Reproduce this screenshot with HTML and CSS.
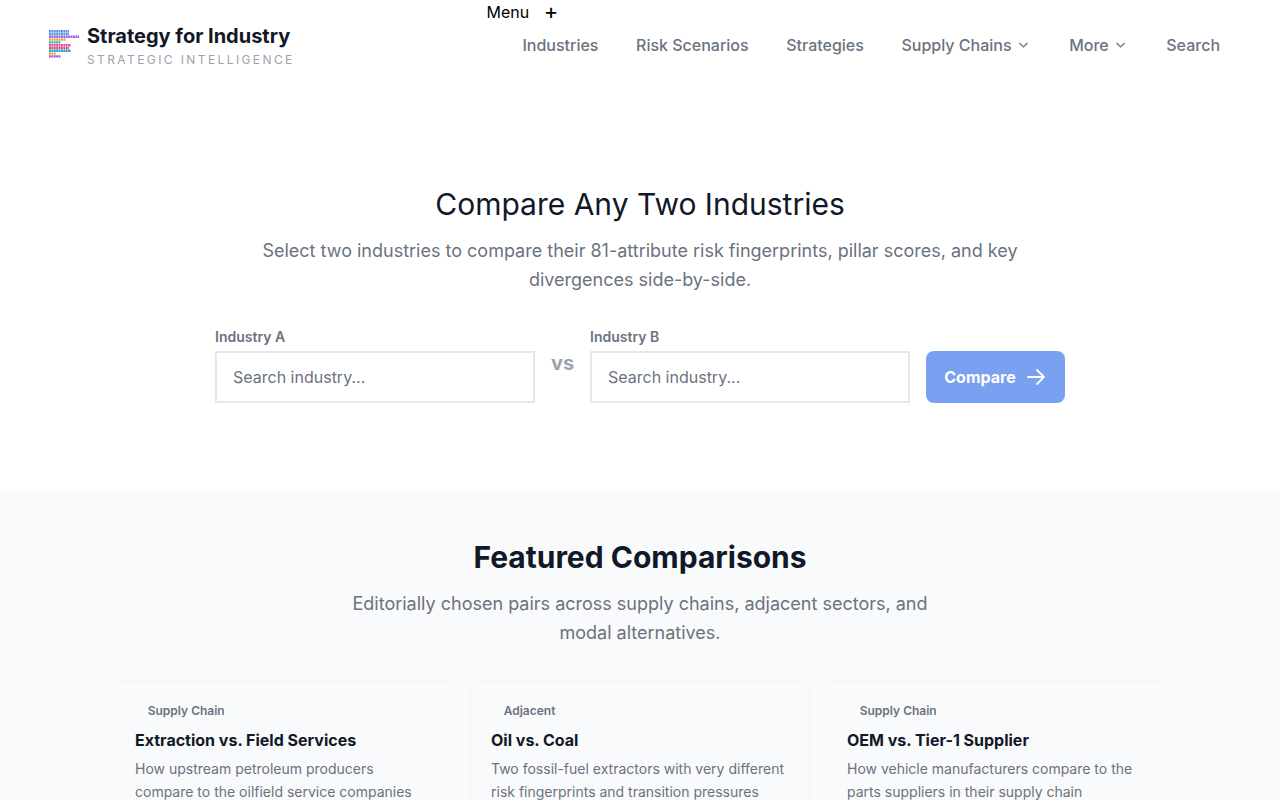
FILE: index.html
```html
<!DOCTYPE html>
<html lang="en">
<head>
<meta charset="utf-8">
<title>Compare Industries</title>
<link rel="stylesheet" href="styles.css">
</head>
<body>
<header class="site-header">
  <a class="brand" href="#">
    <svg class="brand-mark" width="30" height="28" viewBox="0 0 30 28" aria-hidden="true">
      <g fill="none" stroke-width="2.4" stroke-dasharray="1.900 .5">
        <path d="M0 1.300H20" stroke="#5f8fe6"/>
        <path d="M0 4H20" stroke="#3fa0e0"/>
        <path d="M0 6.800H30" stroke="#9b5fe0"/>
        <path d="M0 9.600H17" stroke="#f0a030"/>
        <path d="M0 12.400H12" stroke="#20b8a8"/>
        <path d="M0 15.200H22" stroke="#ec4899"/>
        <path d="M0 18H20" stroke="#e0408c"/>
        <path d="M0 20.800H22" stroke="#14a8b8"/>
        <path d="M0 23.600H7" stroke="#f0a030"/>
        <path d="M0 26.400H12" stroke="#a050e0"/>
      </g>
    </svg>
    <span class="brand-text">
      <span class="brand-name">Strategy for Industry</span>
      <span class="brand-sub">STRATEGIC INTELLIGENCE</span>
    </span>
  </a>
  <div class="nav-wrap">
    <button class="menu-toggle" type="button">Menu <span class="menu-plus">+</span></button>
    <nav class="nav">
      <a href="#">Industries</a>
      <a href="#">Risk Scenarios</a>
      <a href="#">Strategies</a>
      <a href="#" class="has-caret">Supply Chains
        <svg width="14" height="14" viewBox="0 0 14 14" aria-hidden="true"><path d="M1.500 5l4 4 4-4" fill="none" stroke="currentColor" stroke-width="1.2"/></svg>
      </a>
      <a href="#" class="has-caret">More
        <svg width="14" height="14" viewBox="0 0 14 14" aria-hidden="true"><path d="M1.500 5l4 4 4-4" fill="none" stroke="currentColor" stroke-width="1.2"/></svg>
      </a>
      <a href="#">Search</a>
    </nav>
  </div>
</header>

<main>
  <section class="hero">
    <h1>Compare Any Two Industries</h1>
    <p class="hero-lead">Select two industries to compare their 81-attribute risk fingerprints, pillar scores, and key divergences side-by-side.</p>
    <form class="compare-form">
      <div class="field">
        <label for="a">Industry A</label>
        <input id="a" type="text" placeholder="Search industry...">
      </div>
      <span class="vs">vs</span>
      <div class="field">
        <label for="b">Industry B</label>
        <input id="b" type="text" placeholder="Search industry...">
      </div>
      <button class="compare-btn" type="button">Compare
        <svg width="20" height="20" viewBox="0 0 20 20" aria-hidden="true"><path d="M1 10H17M10 3l7 7-7 7" fill="none" stroke="currentColor" stroke-width="1.8" stroke-linecap="round" stroke-linejoin="round"/></svg>
      </button>
    </form>
  </section>

  <section class="featured">
    <h2>Featured Comparisons</h2>
    <p class="featured-lead">Editorially chosen pairs across supply chains, adjacent sectors, and modal alternatives.</p>
    <div class="cards">
      <article class="card">
        <span class="tag">Supply Chain</span>
        <h3>Extraction vs. Field Services</h3>
        <p>How upstream petroleum producers compare to the oilfield service companies</p>
      </article>
      <article class="card">
        <span class="tag">Adjacent</span>
        <h3>Oil vs. Coal</h3>
        <p>Two fossil-fuel extractors with very different risk fingerprints and transition pressures</p>
      </article>
      <article class="card">
        <span class="tag">Supply Chain</span>
        <h3>OEM vs. Tier-1 Supplier</h3>
        <p>How vehicle manufacturers compare to the parts suppliers in their supply chain</p>
      </article>
    </div>
  </section>
</main>
</body>
</html>
```
FILE: styles.css
```css
* { box-sizing: border-box; }
html, body { margin: 0; padding: 0; }
body {
  font-family: Inter, "Liberation Sans", sans-serif;
  color: #111827;
  background: #fff;
}
a { text-decoration: none; color: inherit; }

.site-header {
  display: flex;
  justify-content: space-between;
  height: 91px;
  padding: 0 60px 0 49px;
}
.brand {
  display: flex;
  align-items: center;
  gap: 8px;
  height: 91px;
}
.brand-mark { flex: none; margin-top: -3px; }
.brand-text { display: flex; flex-direction: column; margin-top: -1px; }
.brand-name {
  font-size: 20px;
  line-height: 28px;
  font-weight: 700;
  color: #111827;
}
.brand-sub {
  margin-top: 1px;
  font-size: 12px;
  line-height: 18px;
  letter-spacing: 2.4px;
  color: #9ca3af;
}
.nav-wrap { position: relative; padding-top: 33px; }
.menu-toggle {
  position: absolute;
  left: -36px;
  top: 0;
  padding: 0;
  border: 0;
  background: none;
  font: 400 16px/24px Inter, sans-serif;
  color: #000;
}
.menu-plus { font-size: 22px; font-weight: 400; margin-left: 10px; line-height: 22px; vertical-align: top; }
.nav {
  display: flex;
  gap: 37.6px;
  font-size: 16px;
  line-height: 24px;
  font-weight: 500;
  color: #6b7280;
}
.has-caret { display: flex; align-items: center; gap: 6px; }

.hero {
  display: flex;
  flex-direction: column;
  align-items: center;
  height: 400px;
  padding-top: 92px;
}
h1 {
  margin: 0;
  font-size: 30px;
  line-height: 42px;
  font-weight: 400;
  color: #111827;
}
.hero-lead {
  margin: 11px 0 0;
  width: 800px;
  font-size: 18px;
  line-height: 29px;
  text-align: center;
  color: #6b7280;
}
.compare-form {
  display: flex;
  align-items: center;
  margin-top: 33px;
  width: 850px;
}
.field { display: flex; flex-direction: column; width: 320px; }
.field label {
  font-size: 14px;
  line-height: 20px;
  font-weight: 600;
  color: #6b7280;
  margin-bottom: 4px;
}
.field input {
  height: 52px;
  padding: 0 16px;
  border: 2px solid #e5e7eb;
  border-radius: 0;
  background: #fff;
  font: 400 16px Inter, sans-serif;
  outline: none;
}
.field input::placeholder { color: #6b7280; opacity: 1; }
.vs {
  width: 55px;
  text-align: center;
  font-size: 20px;
  font-weight: 700;
  color: #9ca3af;
  margin-top: -4px;
}
.compare-btn {
  margin: 24px 0 0 16px;
  width: 139px;
  height: 52px;
  display: flex;
  align-items: center;
  justify-content: center;
  gap: 11px;
  border: 0;
  border-radius: 8px;
  background: #7aa0f2;
  color: #fff;
  font: 700 16px Inter, sans-serif;
}

.featured {
  background: #f9fafb;
  padding: 46px 114px 60px;
  text-align: center;
}
h2 {
  margin: 0;
  font-size: 30px;
  line-height: 40px;
  font-weight: 700;
  color: #111827;
}
.featured-lead {
  margin: 12px auto 0;
  width: 600px;
  font-size: 18px;
  line-height: 29px;
  color: #6b7280;
}
.cards {
  display: grid;
  grid-template-columns: repeat(3, 340px);
  gap: 16px;
  margin-top: 33px;
  text-align: left;
}
.card {
  padding: 20px;
  border: 1px solid #f3f4f6;
  border-radius: 12px;
  background: #f9fafb;
}
.tag {
  display: block;
  padding-left: 12.700px;
  font-size: 12px;
  line-height: 20px;
  font-weight: 600;
  color: #6b7280;
}
.card h3 {
  margin: 7px 0 0;
  font-size: 16px;
  line-height: 24px;
  font-weight: 700;
  color: #111827;
}
.card p {
  margin: 5px 0 0;
  font-size: 14px;
  line-height: 23px;
  color: #6b7280;
}
```
